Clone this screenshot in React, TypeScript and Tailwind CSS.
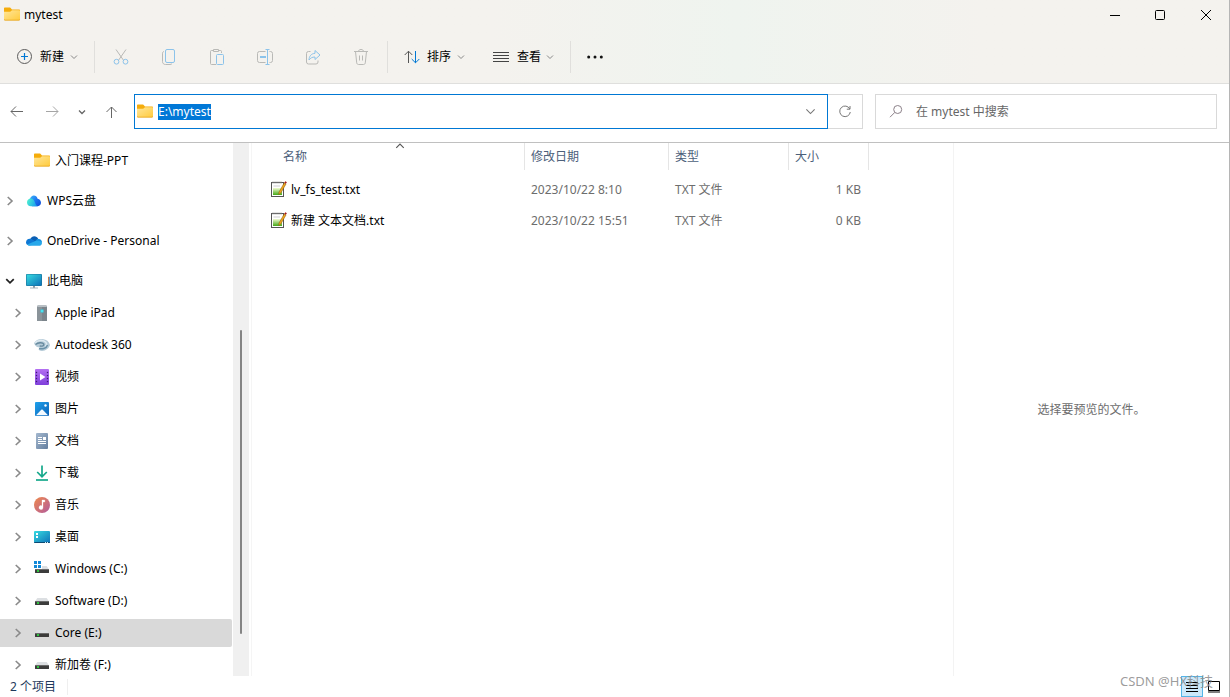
import { useEffect, useRef } from "react";
import type { ReactNode } from "react";

function FolderIcon() {
  return (
    <svg width="16" height="16" viewBox="0 0 16 16" className="shrink-0" aria-hidden="true">
      <defs>
        <linearGradient id="folderFill" x1="0" y1="0" x2="1" y2="1">
          <stop offset="0" stopColor="#ffe69a" />
          <stop offset="1" stopColor="#ffcb3d" />
        </linearGradient>
      </defs>
      <path d="M0 1.600C0 1 .4.600 1 .600h4.600c.4 0 .7.1 1 .4L8 2.400h7c.6 0 1 .4 1 1V8H0z" fill="#f5ac0a" />
      <path d="M0 4.700h6.200L8 3.300h7.200c.5 0 .8.3.8.8v8.200c0 .5-.4.9-.9.9H.9c-.5 0-.9-.4-.9-.9z" fill="url(#folderFill)" />
      <path d="M0 12.300c0 .5.4.9.9.9h14.200c.5 0 .9-.4.9-.9" fill="none" stroke="#e8a317" strokeWidth=".8" />
    </svg>
  );
}

function CloudIcon({ kind }: { kind: "wps" | "one" }) {
  if (kind === "wps") {
    return (
      <svg width="16" height="16" viewBox="0 0 16 16" className="shrink-0" aria-hidden="true">
        <defs>
          <linearGradient id="wpsLeft" x1="0" y1=".3" x2="1" y2=".6">
            <stop offset="0" stopColor="#4cf0d0" />
            <stop offset="1" stopColor="#1597f2" />
          </linearGradient>
          <linearGradient id="wpsRight" x1="0" y1="0" x2="1" y2="1">
            <stop offset="0" stopColor="#3cb4fb" />
            <stop offset=".5" stopColor="#1c73ee" />
            <stop offset="1" stopColor="#0f49d6" />
          </linearGradient>
        </defs>
        <path d="M4 6C5 1.500 10.500 1.300 11.600 5.800 14 6.200 15 8 15 9.700c0 2.200-1.700 3.600-3.700 3.600H6z" fill="url(#wpsRight)" />
        <path d="M5 13.300C2.600 13.300 1 11.600 1 9.500c0-2.200 1.600-3.900 3.600-3.900 2.800 0 3.700 2 4.400 4 .6 1.800 1.400 3.700 3 3.700z" fill="url(#wpsLeft)" />
      </svg>
    );
  }
  return (
    <svg width="16" height="16" viewBox="0 0 16 16" className="shrink-0" aria-hidden="true">
      <path d="M4.300 6C5.500 2.600 10.600 1.800 12.300 6.100L9 9z" fill="#0a5fb4" />
      <path d="M3 12.500C1.200 12.300 0 10.900 0 9.300c0-2 1.600-3.600 3.700-3.600 1.300 0 2 .4 3 1l3.300 2L6 12z" fill="#0f78d4" />
      <path d="M9.300 8.300c.8-1.500 1.900-2.300 3.300-2.200 2 .1 3.400 1.500 3.400 3.200z" fill="#1490df" />
      <path d="M1.200 11.600 9.500 8c2-.6 4.800.1 6.400 1.200.4 2-1 3.600-2.900 3.600H3.600c-1 0-1.800-.4-2.400-1.200z" fill="#28a8ea" />
    </svg>
  );
}

function ComputerIcon() {
  return (
    <svg width="16" height="16" viewBox="0 0 16 16" className="shrink-0" aria-hidden="true">
      <defs>
        <linearGradient id="screen" x1="0" y1="0" x2="1" y2="1">
          <stop offset="0" stopColor="#36dbe0" />
          <stop offset="1" stopColor="#0e71b8" />
        </linearGradient>
      </defs>
      <path d="M7 13h2v2H7z" fill="#8d9aa5" />
      <path d="M4 14.500h8v1H4z" fill="#a9b4bd" />
      <rect x="0" y="1" width="16" height="12" rx="1" fill="#1a6f99" />
      <rect x=".6" y="1.600" width="14.800" height="10.800" rx=".5" fill="url(#screen)" />
    </svg>
  );
}

function DeviceIcon() {
  return (
    <svg width="16" height="16" viewBox="0 0 16 16" className="shrink-0" aria-hidden="true">
      <path d="M4 0h8l1 2v14H3V2z" fill="#7b848b" />
      <path d="M4 0h8l1 2H3z" fill="#b8bfc4" />
      <path d="M3 2h5v14H3z" fill="#8a9399" />
      <circle cx="8" cy="6" r="2" fill="#4fb9cc" />
      <circle cx="8" cy="6" r="1" fill="#48f0f8" />
    </svg>
  );
}

function AutodeskIcon() {
  return (
    <svg width="16" height="16" viewBox="0 0 16 16" className="shrink-0" aria-hidden="true">
      <path d="M0 6C2 3 5 1.600 8.600 2c3.800.4 6.600 2.600 7.400 6-.8 3-4 5.800-8 6-2 0-3.200-.8-3.400-2l1.400-1.500C3 10.500 1 9 0 6z" fill="#b4cad7" />
      <path d="M.8 6.300c2.400-3 7.400-4 10.700-1.300 1.600 1.400 1.200 3.100-.3 4.500" fill="none" stroke="#dde9f0" strokeWidth="1.600" />
      <path d="M1.500 7.500C4 5.500 8.600 5 9.800 7.200c.6 1.500-1.600 2.300-4.100 1.800" fill="none" stroke="#66899e" strokeWidth="1.400" />
      <path d="M5 11.500c3.700 1 7.500-.2 8.500-3.500" fill="none" stroke="#6a91a8" strokeWidth="1.500" />
    </svg>
  );
}

function VideoIcon() {
  return (
    <svg width="16" height="16" viewBox="0 0 16 16" className="shrink-0" aria-hidden="true">
      <defs>
        <linearGradient id="video" x1="0" y1="0" x2="0" y2="1">
          <stop offset="0" stopColor="#b470f2" />
          <stop offset="1" stopColor="#7f3fdb" />
        </linearGradient>
      </defs>
      <rect x="1" y="0" width="14" height="16" rx="1" fill="url(#video)" />
      <path d="M2 3h1v1H2zM2 6h1v1H2zM2 9h1v1H2zM2 12h1v1H2zM13 3h1v1h-1zM13 6h1v1h-1zM13 9h1v1h-1zM13 12h1v1h-1z" fill="#3e1c77" stroke="#3e1c77" strokeWidth=".3" />
      <path d="m6 4.500 5.500 3.500L6 11.500z" fill="#fff" />
    </svg>
  );
}

function PictureIcon() {
  return (
    <svg width="16" height="16" viewBox="0 0 16 16" className="shrink-0" aria-hidden="true">
      <defs>
        <linearGradient id="picture" x1="0" y1="0" x2="1" y2="1">
          <stop offset="0" stopColor="#1ea1ec" />
          <stop offset="1" stopColor="#0b62b8" />
        </linearGradient>
      </defs>
      <rect x="1" y="1" width="14" height="14" rx="1" fill="url(#picture)" />
      <path d="M2 14.300 7.300 8.700c.4-.4 1-.4 1.400 0l5.300 5.600z" fill="#f4faff" />
      <circle cx="11.500" cy="4.500" r="1.200" fill="#fff" />
    </svg>
  );
}

function DocumentIcon() {
  return (
    <svg width="16" height="16" viewBox="0 0 16 16" className="shrink-0" aria-hidden="true">
      <defs>
        <linearGradient id="document" x1="0" y1="0" x2="1" y2="1">
          <stop offset="0" stopColor="#a4b8cf" />
          <stop offset="1" stopColor="#647f9f" />
        </linearGradient>
      </defs>
      <rect x="2" y="0" width="12" height="16" rx="1" fill="url(#document)" />
      <path d="M4 4h4v1H4zM4 6h4v1H4zM9 4h3v3H9zM4 8h8v1H4zM4 10h8v1H4z" fill="#fff" />
    </svg>
  );
}

function DownloadIcon() {
  return (
    <svg width="16" height="16" viewBox="0 0 16 16" className="shrink-0" fill="none" stroke="#15a88b" strokeWidth="1.700" aria-hidden="true">
      <path d="M8 .5v11M3.200 7 8 11.800 12.800 7" />
      <path d="M2 15h12" />
    </svg>
  );
}

function MusicIcon() {
  return (
    <svg width="16" height="16" viewBox="0 0 16 16" className="shrink-0" aria-hidden="true">
      <defs>
        <linearGradient id="music" x1="0" y1="0" x2="1" y2="1">
          <stop offset="0" stopColor="#f08a4b" />
          <stop offset="1" stopColor="#b15a9e" />
        </linearGradient>
      </defs>
      <circle cx="8" cy="8" r="8" fill="url(#music)" />
      <path d="M8 3h2.800v2H9v5.500a2 2 0 1 1-1-1.700z" fill="#fff" stroke="#fff" strokeWidth=".3" />
    </svg>
  );
}

function DesktopIcon() {
  return (
    <svg width="16" height="16" viewBox="0 0 16 16" className="shrink-0" aria-hidden="true">
      <rect x="0" y="2" width="16" height="12" rx="1" fill="url(#screen)" />
      <path d="M0 13h16a1 1 0 0 1-1 1H1a1 1 0 0 1-1-1z" fill="#0c4a73" />
      <path d="M2 4h2v2H2zM2 7h2v2H2z" fill="#fff" />
      <path d="M11 13h1v1h-1zM13 13h1v1h-1z" fill="#d5ecf5" />
    </svg>
  );
}

function DriveIcon({ system }: { system?: boolean }) {
  return (
    <svg width="16" height="16" viewBox="0 0 16 16" className="shrink-0" aria-hidden="true">
      <path d="M3.300 5h9.400L15 8.500H1z" fill="#dcdfe2" />
      <rect x="1" y="8" width="14" height="4" rx=".5" fill="#3c3c3c" />
      <path d="M1 8h14v1H1z" fill="#6a6a6a" />
      <rect x="3" y="9" width="2" height="2" fill="#2fc440" />
      {system && (
        <>
          <path d="M-.5-.5H8V8H-.5z" fill="#fff" />
          <path d="M0 0h3v3H0zM4 0h3v3H4zM0 4h3v3H0zM4 4h3v3H4z" fill="#1389d8" />
        </>
      )}
    </svg>
  );
}

function TextFileIcon() {
  return (
    <svg width="16" height="17" viewBox="0 0 16 17" className="shrink-0" aria-hidden="true">
      <defs>
        <linearGradient id="pad" x1="0" y1="0" x2="0" y2="1">
          <stop offset="0" stopColor="#f2fbd0" />
          <stop offset="1" stopColor="#43a815" />
        </linearGradient>
      </defs>
      <rect x=".5" y="1.500" width="12" height="14" fill="#fff" stroke="#555" />
      <path d="M2 .5v2M4 .5v2M6 .5v2M8 .5v2M10 .5v2" stroke="#8a8a8a" strokeWidth=".9" />
      <path d="M2.500 5h6.500" stroke="#c3c3c3" strokeWidth=".8" />
      <path d="M2 7h9v7H2z" fill="url(#pad)" />
      <path d="m13.300 1.800 1.700 1.200-5.300 9.200-2 1.300.3-2.400z" fill="#f2a41f" stroke="#7d5a10" strokeWidth=".5" />
      <path d="m13.300 1.800 1-1.500 1.600 1-1 1.500z" fill="#a61818" />
    </svg>
  );
}

function Chevron({ dir, size = 8, className }: { dir: "down" | "right" | "up"; size?: number; className: string }) {
  const paths = { down: "M1 2.500 4 5.500l3-3", right: "M2.200.8 5.600 4 2.200 7.200", up: "M1 5.500 4 2.500l3 3" };
  return (
    <svg width={size} height={size} viewBox="0 0 8 8" fill="none" stroke="currentColor" className={className} aria-hidden="true">
      <path d={paths[dir]} />
    </svg>
  );
}

function Tool({ label, children }: { label: string; children: ReactNode }) {
  return (
    <button type="button" aria-label={label} className="flex h-8 w-12 items-center justify-center">
      <svg width="18" height="18" viewBox="0 0 18 18" fill="none" stroke="#b9b9b6" aria-hidden="true">
        {children}
      </svg>
    </button>
  );
}

type Node = { label: string; icon: ReactNode; selected?: boolean };

const places: Node[] = [
  { label: "Apple iPad", icon: <DeviceIcon /> },
  { label: "Autodesk 360", icon: <AutodeskIcon /> },
  { label: "视频", icon: <VideoIcon /> },
  { label: "图片", icon: <PictureIcon /> },
  { label: "文档", icon: <DocumentIcon /> },
  { label: "下载", icon: <DownloadIcon /> },
  { label: "音乐", icon: <MusicIcon /> },
  { label: "桌面", icon: <DesktopIcon /> },
  { label: "Windows (C:)", icon: <DriveIcon system /> },
  { label: "Software (D:)", icon: <DriveIcon /> },
  { label: "Core (E:)", icon: <DriveIcon />, selected: true },
  { label: "新加卷 (F:)", icon: <DriveIcon /> },
];

const files = [
  { name: "lv_fs_test.txt", date: "2023/10/22 8:10", type: "TXT 文件", size: "1 KB" },
  { name: "新建 文本文档.txt", date: "2023/10/22 15:51", type: "TXT 文件", size: "0 KB" },
];

function TopRow({ label, icon, open }: { label: string; icon: ReactNode; open?: boolean }) {
  return (
    <button type="button" className="flex h-7 w-full items-center text-left">
      <span className="flex w-[26px] shrink-0 pl-[5px]">
        <Chevron dir={open ? "down" : "right"} size={10} className={open ? "stroke-[1.4] text-[#222]" : "stroke-[1.3] text-[#8a8a8a]"} />
      </span>
      {icon}
      <span className="pl-[5px]">{label}</span>
    </button>
  );
}

export default function App() {
  const address = useRef<HTMLInputElement>(null);

  useEffect(() => {
    address.current?.focus();
    address.current?.select();
  }, []);

  return (
    <div className="flex h-screen flex-col overflow-hidden border-r border-[#b5b5b5] bg-white font-['Noto_Sans','Noto_Sans_CJK_SC',sans-serif] text-xs text-black">
      <header className="border-b border-[#dfdfdd] bg-linear-to-r from-[#f4f2ee] from-40% via-[#eff4ef] via-60% to-[#f4f2ee] to-80%">
        <div className="flex h-[29px] items-center justify-between pl-1">
          <div className="flex items-center gap-1">
            <FolderIcon />
            <h1>mytest</h1>
          </div>
          <div className="flex h-full">
            <button type="button" aria-label="最小化" className="flex w-[46px] items-center justify-center">
              <svg width="10" height="10" viewBox="0 0 10 10" stroke="#000"><path d="M0 5.500h10" /></svg>
            </button>
            <button type="button" aria-label="最大化" className="flex w-11 items-center justify-center">
              <svg width="10" height="10" viewBox="0 0 10 10" stroke="#000" fill="none"><rect x=".5" y=".5" width="9" height="9" rx="1" /></svg>
            </button>
            <button type="button" aria-label="关闭" className="flex w-[47px] items-center justify-center">
              <svg width="10" height="10" viewBox="0 0 10 10" stroke="#000"><path d="m0 0 10 10M10 0 0 10" /></svg>
            </button>
          </div>
        </div>
        <div className="flex h-[54px] items-center pt-px">
          <button type="button" className="flex w-[94px] items-center pl-4">
            <svg width="17" height="17" viewBox="0 0 17 17" fill="none" aria-hidden="true">
              <circle cx="8.500" cy="8.500" r="7" stroke="#5c5c5c" />
              <path d="M8.500 5v7M5 8.500h7" stroke="#0078d4" strokeWidth="1.200" />
            </svg>
            <span className="pl-[7px]">新建</span>
            <Chevron dir="down" className="ml-[6px] text-[#888]" />
          </button>
          <div className="h-8 border-l border-[#e0dfdc]" />
          <div className="flex w-[292px] pl-[2px]">
            <Tool label="剪切">
              <path d="M4 1.500 11.300 12M14 1.500 6.700 12" />
              <circle cx="4.500" cy="13.700" r="2.400" stroke="#8cc3ea" />
              <circle cx="13.500" cy="13.700" r="2.400" stroke="#8cc3ea" />
            </Tool>
            <Tool label="复制">
              <path d="M4 3.500C3 3.700 2.500 4.300 2.500 5.200v8.300c0 1.800 1.200 3 3 3H10c1 0 1.700-.4 2-1" />
              <rect x="5.500" y="1.500" width="9" height="13" rx="1.500" stroke="#8cc3ea" />
            </Tool>
            <Tool label="粘贴">
              <path d="M8 16.500H3.500a1 1 0 0 1-1-1v-12a1 1 0 0 1 1-1H5M11 2.500h1.500a1 1 0 0 1 1 1V5M5.500 1.500h5v2h-5z" />
              <rect x="8.500" y="6.500" width="7" height="10" rx="1" stroke="#8cc3ea" />
            </Tool>
            <Tool label="重命名">
              <path d="M9.500 3.500h-6a2 2 0 0 0-2 2v7a2 2 0 0 0 2 2h6M13.500 3.500h1a2 2 0 0 1 2 2v7a2 2 0 0 1-2 2h-1" />
              <path d="M11.500 1.500v15M9.500 1.500h4M9.500 16.500h4" stroke="#8cc3ea" />
              <path d="M4 9h6" stroke="#8cc3ea" strokeWidth="2" />
            </Tool>
            <Tool label="共享">
              <path d="M6.500 3.500h-2a2 2 0 0 0-2 2v8.500a2 2 0 0 0 2 2H12a2 2 0 0 0 2-2v-1.500" />
              <path d="M11 2.500 16 7l-5 4.500V9c-3 0-4.500 1-6 3 .2-3.800 2-6.300 6-6.700z" stroke="#8cc3ea" strokeLinejoin="round" />
            </Tool>
            <Tool label="删除">
              <path d="M2 3.500h14M3.500 3.500l1.200 11.300c.1 1 .8 1.700 1.800 1.700h5c1 0 1.700-.7 1.800-1.700l1.200-11.300M6.500 3.500c0-1.300 1-2 2.500-2s2.500.7 2.500 2M7.500 7.500v5M10.500 7.500v5" />
            </Tool>
          </div>
          <div className="h-8 border-l border-[#e0dfdc]" />
          <button type="button" className="flex w-[88px] items-center pl-4">
            <svg width="17" height="14" viewBox="0 0 17 14" fill="none" aria-hidden="true">
              <path d="M4.500 13V1.200M.7 5l3.800-3.800L8.300 5" stroke="#555" />
              <path d="M11.500 1v11.800M7.700 9l3.800 3.800L15.300 9" stroke="#0078d4" />
            </svg>
            <span className="pl-[6px]">排序</span>
            <Chevron dir="down" className="ml-[6px] text-[#888]" />
          </button>
          <button type="button" className="flex w-[94px] items-center pl-[17px]">
            <svg width="17" height="12" viewBox="0 0 17 12" stroke="#444" aria-hidden="true">
              <path d="M0 1.500h16M0 4.500h16M0 7.500h16M0 10.500h16" />
            </svg>
            <span className="pl-[7px]">查看</span>
            <Chevron dir="down" className="ml-[5px] text-[#888]" />
          </button>
          <div className="h-8 border-l border-[#e0dfdc]" />
          <button type="button" aria-label="更多" className="flex h-8 w-12 items-center justify-center">
            <svg width="16" height="4" viewBox="0 0 16 4" fill="#111" aria-hidden="true">
              <circle cx="1.700" cy="2" r="1.500" /><circle cx="8" cy="2" r="1.500" /><circle cx="14.300" cy="2" r="1.500" />
            </svg>
          </button>
        </div>
      </header>

      <div className="flex items-center border-b border-[#c0c0c0] pt-[10px] pr-3 pb-[13px]">
        <nav aria-label="导航" className="flex w-[134px] shrink-0 items-center pl-[10px]">
          <button type="button" aria-label="后退">
            <svg width="13" height="12" viewBox="0 0 13 12" fill="none" stroke="#666"><path d="M13 5.500H1M6 .5l-5 5 5 5" /></svg>
          </button>
          <button type="button" aria-label="前进" className="ml-[23px]">
            <svg width="13" height="12" viewBox="0 0 13 12" fill="none" stroke="#a5a5a5"><path d="M0 5.500h12M7 .5l5 5-5 5" /></svg>
          </button>
          <button type="button" aria-label="最近的位置" className="ml-[19px]">
            <Chevron dir="down" className="stroke-[1.300] text-[#666]" />
          </button>
          <button type="button" aria-label="向上" className="ml-5">
            <svg width="12" height="12" viewBox="0 0 12 12" fill="none" stroke="#666"><path d="M5.500 12V1M.5 6l5-5 5 5" /></svg>
          </button>
        </nav>
        <div className="flex h-[35px] flex-2 items-center border border-[#0078d4] pl-[2px]">
          <FolderIcon />
          <input
            ref={address}
            type="text"
            aria-label="地址"
            defaultValue="E:\mytest"
            className="ml-[5px] min-w-0 flex-1 outline-none selection:bg-[#0078d7] selection:text-white"
          />
          <button type="button" aria-label="以前的位置" className="flex w-[34px] justify-center">
            <Chevron dir="down" size={11} className="stroke-[0.800] text-[#777]" />
          </button>
        </div>
        <button type="button" aria-label="刷新" className="mr-3 flex h-[35px] w-[35px] shrink-0 items-center justify-center border border-l-0 border-[#d9d9d9]">
          <svg width="14" height="14" viewBox="0 0 14 14" fill="none" stroke="#777" aria-hidden="true">
            <path d="M11.800 4A5.300 5.300 0 1 0 12.300 7M12 1v3.200H8.800" />
          </svg>
        </button>
        <label className="flex h-[35px] w-[342px] shrink-0 items-center border border-[#d9d9d9] pl-[13px]">
          <svg width="14" height="14" viewBox="0 0 14 14" fill="none" stroke="#8b8088" aria-hidden="true">
            <circle cx="8.700" cy="4.500" r="4" /><path d="M5.700 7.500 1 12.200" />
          </svg>
          <input type="search" aria-label="搜索" placeholder="在 mytest 中搜索" className="ml-[13px] min-w-0 flex-1 outline-none placeholder:text-[#666]" />
        </label>
      </div>

      <main className="flex min-h-0 flex-1">
        <nav aria-label="文件夹" className="w-[233px] shrink-0 overflow-hidden pt-1">
          <div className="flex flex-col gap-3">
            <button type="button" className="flex h-7 items-center pl-[34px]">
              <FolderIcon />
              <span className="pl-[5px]">入门课程-PPT</span>
            </button>
            <TopRow label="WPS云盘" icon={<CloudIcon kind="wps" />} />
            <TopRow label="OneDrive - Personal" icon={<CloudIcon kind="one" />} />
            <TopRow label="此电脑" icon={<ComputerIcon />} open />
          </div>
          <ul className="flex flex-col gap-1 pt-1 pr-px">
            {places.map((p) => (
              <li key={p.label}>
                <button type="button" className={`flex h-7 w-full items-center rounded-r-xs pl-[13px] ${p.selected ? "bg-[#d9d9d9]" : ""}`}>
                  <Chevron dir="right" size={10} className="mr-[11px] stroke-[1.3] text-[#8a8a8a]" />
                  {p.icon}
                  <span className="pl-[5px]">{p.label}</span>
                </button>
              </li>
            ))}
          </ul>
        </nav>
        <div className="flex w-4 shrink-0 flex-col items-center bg-[#f0f0f0]">
          <div className="flex-[187]" />
          <div className="w-[2px] flex-[304] rounded-full bg-[#858585]" />
          <div className="flex-[42]" />
        </div>

        <section className="ml-[2px] min-w-0 flex-1 overflow-hidden border-l border-[#f5f5f5]">
          <table className="w-[617px] table-fixed border-separate border-spacing-0 text-[#6d6d6d]">
            <colgroup>
              <col className="w-[273px]" />
              <col className="w-36" />
              <col className="w-[120px]" />
              <col className="w-20" />
            </colgroup>
            <thead>
              <tr className="h-[27px] text-left text-[#4c607a]">
                <th className="relative border-r border-[#e5e5e5] pl-[31px] font-normal">
                  名称
                  <Chevron dir="up" size={10} className="absolute -top-[2px] right-[119px] stroke-[0.900] text-[#555]" />
                </th>
                <th className="border-r border-[#e5e5e5] pl-[6px] font-normal">修改日期</th>
                <th className="border-r border-[#e5e5e5] pl-[6px] font-normal">类型</th>
                <th className="border-r border-[#e5e5e5] pl-[6px] font-normal">大小</th>
              </tr>
            </thead>
            <tbody>
              <tr className="h-1"><td colSpan={4} /></tr>
              {files.map((f) => (
                <tr key={f.name} className="h-[31px]">
                  <td className="pl-[19px] text-black">
                    <div className="flex items-center gap-1">
                      <TextFileIcon />
                      {f.name}
                    </div>
                  </td>
                  <td className="pl-[6px]">{f.date}</td>
                  <td className="pl-[6px]">{f.type}</td>
                  <td className="pr-2 text-right">{f.size}</td>
                </tr>
              ))}
            </tbody>
          </table>
        </section>

        <aside className="flex w-[276px] shrink-0 items-center justify-center border-l border-[#f3f3f3] text-[#6d6d6d]">
          选择要预览的文件。
        </aside>
      </main>

      <footer className="relative flex h-[21px] shrink-0 items-center justify-between pr-1 pl-[10px] text-[#1e395b]">
        <span className="border-r border-[#efefef] pr-[11px]">2 个项目</span>
        <div className="flex">
          <button type="button" aria-label="详细信息" className="flex h-[21px] w-[22px] items-center justify-center border border-[#55b5e8] bg-[#cce8fa]">
            <svg width="12" height="12" viewBox="0 0 12 12" stroke="#000"><path d="M0 1.500h12M0 4.500h12M0 7.500h12M0 10.500h12" /></svg>
          </button>
          <button type="button" aria-label="大图标" className="flex h-[21px] w-[22px] items-center justify-center">
            <svg width="12" height="12" viewBox="0 0 12 12" stroke="#000" fill="none"><path d="M.5.500h11v9H.5zM0 11h12" /></svg>
          </button>
        </div>
        <span className="pointer-events-none absolute right-4 bottom-[7px] text-[13px] text-[#8a8a8a]/85">CSDN @HX科技</span>
      </footer>
    </div>
  );
}
